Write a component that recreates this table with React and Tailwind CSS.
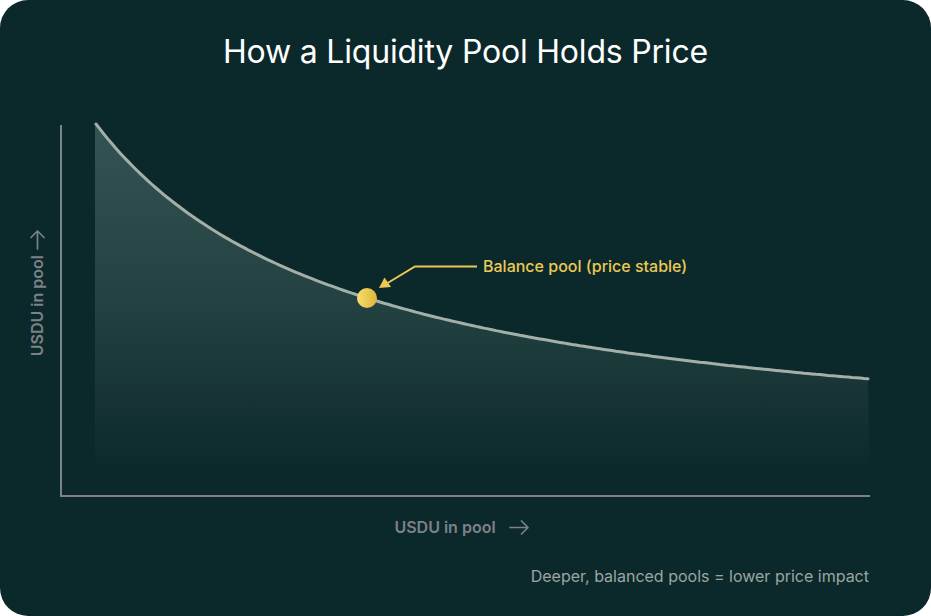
import React from 'react'

// hyperbola fitted to the reference curve, in page coordinates
const curveY = (x) => 464.3 - 88137 / (x + 163)

const curvePoints = []
for (let x = 96; x <= 870; x += 4) {
  curvePoints.push([x, curveY(x)])
}
const curveD = curvePoints.map(([x, y], i) => `${i === 0 ? 'M' : 'L'}${x} ${y.toFixed(1)}`).join(' ')
const fillD = `M95 124 ${curvePoints.map(([x, y]) => `L${x} ${y.toFixed(1)}`).join(' ')} L870 496 L95 496 Z`

function Chart() {
  return (
    <svg width="830" height="384" viewBox="54 118 830 384" className="block shrink-0">
      <defs>
        <linearGradient id="poolFill" gradientUnits="userSpaceOnUse" x1="0" y1="124" x2="0" y2="470">
          <stop offset="0" stopColor="#345353" />
          <stop offset="0.55" stopColor="#22403f" />
          <stop offset="0.8" stopColor="#173334" />
          <stop offset="1" stopColor="#0b292b" />
        </linearGradient>
        <linearGradient id="dotFill" x1="0" y1="0" x2="1" y2="0">
          <stop offset="0" stopColor="#f8de6c" />
          <stop offset="1" stopColor="#dcb63c" />
        </linearGradient>
      </defs>

      {/* area under the curve */}
      <path d={fillD} fill="url(#poolFill)" />

      {/* axes */}
      <path d="M61 125 V496 H870" fill="none" stroke="#7d8188" strokeWidth="2" />

      {/* curve */}
      <path d={curveD} fill="none" stroke="#a3afa7" strokeWidth="3" strokeLinecap="round" />

      {/* callout arrow */}
      <path d="M477 266.5 H415 L386 284" fill="none" stroke="#ecc954" strokeWidth="2" />
      <path d="M379 288 L384.5 277.5 L391 287 Z" fill="#ecc954" />

      {/* balance point */}
      <circle cx="367" cy="298" r="10" fill="url(#dotFill)" />
    </svg>
  )
}

function ArrowRight() {
  return (
    <svg width="20" height="15" viewBox="0 0 20 15" fill="none" stroke="#7d8188" strokeWidth="1.7" strokeLinecap="round" strokeLinejoin="round">
      <path d="M1 7.5 H19 M12.5 1 L19 7.5 L12.5 14" />
    </svg>
  )
}

function ArrowUp() {
  return (
    <svg width="15" height="20" viewBox="0 0 15 20" fill="none" stroke="#7d8188" strokeWidth="1.7" strokeLinecap="round" strokeLinejoin="round">
      <path d="M7.5 19 V1 M1 7.5 L7.5 1 L14 7.5" />
    </svg>
  )
}

export default function App() {
  return (
    <div className="w-[931px] h-[616px] bg-white font-['Inter','Noto_Sans',sans-serif]">
      <div className="relative w-full h-full rounded-[28px] bg-[#0b292b] overflow-hidden flex flex-col">

        {/* Title */}
        <h1 className="pt-[32px] text-center text-[32px] leading-[40px] font-normal text-white tracking-[-0.2px]">
          How a Liquidity Pool Holds Price
        </h1>

        {/* Chart row */}
        <div className="mt-[46px] flex">
          <div className="w-[54px] flex pl-[29px] pt-[112px]">
            <div className="flex flex-col items-center gap-[5px]">
              <ArrowUp />
              <span className="[writing-mode:vertical-rl] rotate-180 text-[16px] leading-[16px] font-semibold text-[#7d8188]">
                USDU in pool
              </span>
            </div>
          </div>
          <div className="relative">
            <Chart />
            <span className="absolute left-[429px] top-[138px] text-[16px] leading-[20px] font-medium text-[#ecc954] whitespace-nowrap">
              Balance pool (price stable)
            </span>
          </div>
        </div>

        {/* X axis label */}
        <div className="mt-[14px] flex items-center justify-center gap-[13px] pr-[8px]">
          <span className="text-[16px] leading-[22px] font-semibold text-[#7d8188]">USDU in pool</span>
          <ArrowRight />
        </div>

        {/* Footer */}
        <p className="mt-[27px] pr-[62px] text-right text-[16px] leading-[22px] text-[#9ba6a1]">
          Deeper, balanced pools = lower price impact
        </p>
      </div>
    </div>
  )
}
